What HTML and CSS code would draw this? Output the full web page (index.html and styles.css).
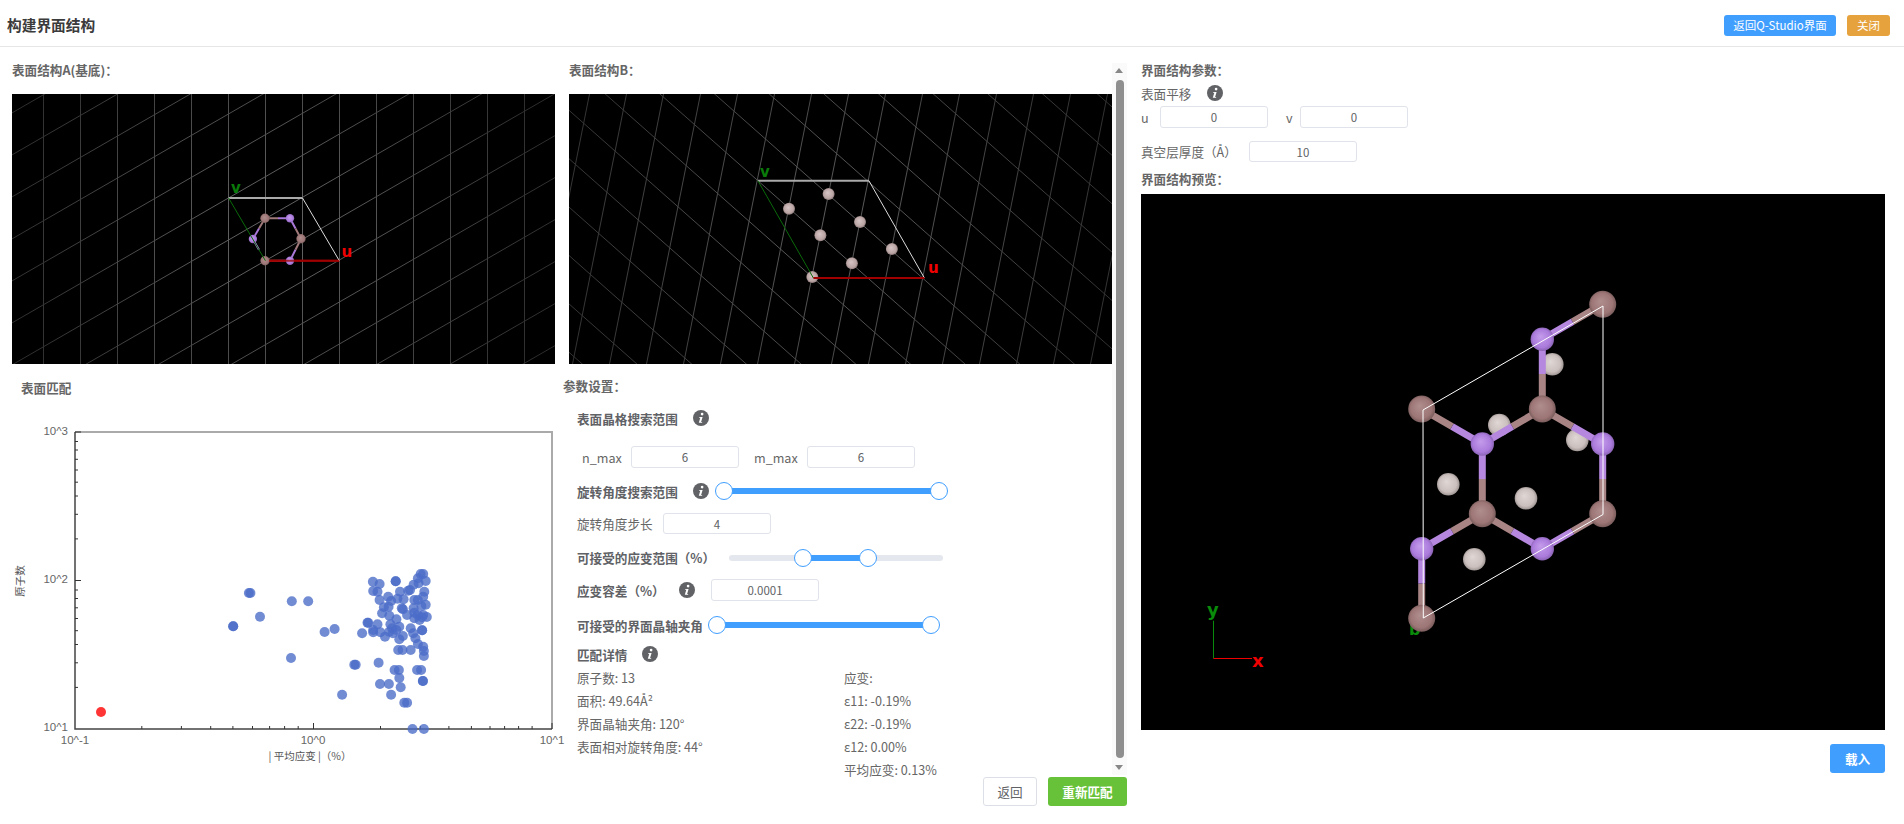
FILE: index.html
```html
<!DOCTYPE html>
<html lang="zh-CN">
<head>
<meta charset="utf-8">
<title>构建界面结构</title>
<link rel="stylesheet" href="styles.css">
</head>
<body>
<svg class="defs" width="0" height="0" aria-hidden="true">
  <defs>
    <radialGradient id="gridA" gradientUnits="userSpaceOnUse" cx="265" cy="135" r="300">
      <stop offset="0" stop-color="#686868"/><stop offset="1" stop-color="#2a2a2a"/>
    </radialGradient>
    <radialGradient id="gridB" gradientUnits="userSpaceOnUse" cx="265" cy="135" r="300">
      <stop offset="0" stop-color="#5e5e5e"/><stop offset="1" stop-color="#303030"/>
    </radialGradient>
    <radialGradient id="brown" cx=".5" cy=".5" r=".55" fx=".42" fy=".38">
      <stop offset="0" stop-color="#b08e8e"/><stop offset=".7" stop-color="#9d7676"/><stop offset="1" stop-color="#6e5353"/>
    </radialGradient>
    <radialGradient id="purple" cx=".5" cy=".5" r=".55" fx=".42" fy=".38">
      <stop offset="0" stop-color="#c49ceb"/><stop offset=".7" stop-color="#ab7bdc"/><stop offset="1" stop-color="#7f5ba6"/>
    </radialGradient>
    <radialGradient id="pale" cx=".5" cy=".5" r=".55" fx=".42" fy=".38">
      <stop offset="0" stop-color="#e0d8d6"/><stop offset=".7" stop-color="#cabfbd"/><stop offset="1" stop-color="#8f8684"/>
    </radialGradient>
    <radialGradient id="mauve" cx=".5" cy=".5" r=".55" fx=".42" fy=".38">
      <stop offset="0" stop-color="#d6c4c4"/><stop offset=".7" stop-color="#bba5a5"/><stop offset="1" stop-color="#7d6c6c"/>
    </radialGradient>
    <symbol id="info" viewBox="0 0 16 16">
      <circle cx="8" cy="8" r="8" fill="#606266"/>
      <circle cx="9.1" cy="4.1" r="1.35" fill="#fff"/>
      <path d="M6.3 6.9h3.3L8.1 11.9h1.2l-.3.9H5.8l1.5-5h-1.3z" fill="#fff"/>
    </symbol>
  </defs>
</svg>

<header class="topbar">
  <h1 class="page-title">构建界面结构</h1>
  <div class="topbar-actions">
    <button class="btn btn-small btn-blue">返回Q-Studio界面</button>
    <button class="btn btn-small btn-orange">关闭</button>
  </div>
</header>

<main class="workspace">
  <section class="matching">
    <div class="viewers">
      <div class="viewer">
        <div class="section-title">表面结构A(基底)：</div>
        <svg class="scene" viewBox="0 0 543 270">
          <rect width="543" height="270"/>
          <path stroke="url(#gridA)" fill="none" d="M31.5 0V270M68.5 0V270M105.5 0V270M142.5 0V270M179.5 0V270M216.5 0V270M253.5 0V270M290.5 0V270M327.5 0V270M364.5 0V270M401.5 0V270M438.5 0V270M475.5 0V270M512.5 0V270"/>
          <path stroke="url(#gridA)" fill="none" d="M0 18.9L543 -294.4M0 60.9L543 -252.4M0 102.9L543 -210.4M0 144.9L543 -168.4M0 186.9L543 -126.4M0 228.9L543 -84.4M0 270.9L543 -42.4M0 312.9L543 -.4M0 354.9L543 41.6M0 396.9L543 83.6M0 438.9L543 125.6M0 480.9L543 167.6M0 522.9L543 209.6M0 564.9L543 251.6"/>
          <g stroke-width="2" fill="none">
            <path stroke="#a07a7a" d="M253 124.3H266M253 124.3L247 134.6M289 144.7L283.500 155.700M253 166.700H266M289 144.7L283.500 134.500"/>
            <path stroke="#a878d8" d="M266 124.300H278M247 134.600L240.900 145M283.500 155.700L278 166.700M266 166.700H278M283.500 134.500L278 124.300M240.900 145L247 155.800"/>
          </g>
          <path d="M253.400 166.700H327.300" stroke="#a00000" stroke-width="2"/>
          <g fill="url(#purple)">
            <circle cx="278" cy="124.300" r="4.200"/><circle cx="278" cy="166.700" r="4.200"/><circle cx="240.900" cy="145" r="4.200"/>
          </g>
          <g fill="url(#brown)">
            <circle cx="253" cy="124.300" r="4.700"/><circle cx="289" cy="144.700" r="4.700"/><circle cx="253" cy="166.700" r="4.700"/>
          </g>
          <path d="M216.600 104H290.500" stroke="#aaa" stroke-width="2"/>
          <path d="M290.500 104L327.300 166.700" stroke="#ddd"/>
          <path d="M216.600 104L253.400 166.700" stroke="#0a6a0a"/>
          <path d="M257 166.700H327.300" stroke="#a00000" stroke-width="2" stroke-opacity=".75"/>
          <text class="axis-letter axis-v" x="219" y="99">v</text>
          <text class="axis-letter axis-u" x="329.500" y="163">u</text>
        </svg>
      </div>
      <div class="viewer">
        <div class="section-title">表面结构B：</div>
        <svg class="scene" viewBox="0 0 543 270">
          <rect width="543" height="270"/>
          <path stroke="url(#gridB)" fill="none" d="M20.500 0L-33.500 270M57.500 0L3.500 270M94.500 0L40.500 270M131.500 0L77.500 270M168.500 0L114.500 270M205.500 0L151.500 270M242.500 0L188.500 270M279.500 0L225.500 270M316.500 0L262.500 270M353.500 0L299.500 270M390.500 0L336.500 270M427.500 0L373.500 270M464.500 0L410.500 270M501.500 0L447.500 270M538.500 0L484.500 270M575.500 0L521.500 270"/>
          <path stroke="url(#gridB)" fill="none" d="M0 -467.700L543 12.900M0 -419.300L543 61.300M0 -370.900L543 109.700M0 -322.500L543 158.100M0 -274.100L543 206.500M0 -225.700L543 254.900M0 -177.300L543 303.300M0 -128.900L543 351.700M0 -80.500L543 400.100M0 -32.100L543 448.500M0 16.300L543 496.900M0 64.700L543 545.300M0 113.100L543 593.700M0 161.500L543 642.100M0 209.900L543 690.500M0 258.300L543 738.900"/>
          <g fill="url(#mauve)">
            <circle cx="259.600" cy="100" r="6"/><circle cx="220" cy="114.700" r="6"/><circle cx="291" cy="128" r="6"/><circle cx="251.400" cy="141.300" r="6"/><circle cx="322.900" cy="155" r="6"/><circle cx="282.900" cy="169.300" r="6"/><circle cx="243.300" cy="183" r="6"/>
          </g>
          <path d="M188.900 86.700H299.900" stroke="#aaa" stroke-width="2"/>
          <path d="M299.900 86.700L355.400 184" stroke="#ddd"/>
          <path d="M188.900 86.700L244.400 184" stroke="#0a6a0a"/>
          <path d="M244.400 184H355.400" stroke="#a00000" stroke-width="2"/>
          <text class="axis-letter axis-v" x="191" y="83">v</text>
          <text class="axis-letter axis-u" x="359" y="179">u</text>
        </svg>
      </div>
    </div>

    <div class="lower">
      <div class="chart-panel">
        <div class="chart-title">表面匹配</div>
        <svg class="chart" viewBox="0 36 560 364" width="560" height="364">
          <path class="frame-light" d="M75 62H552V359"/>
          <path class="frame-dark" d="M75 62V359H552"/>
          <path class="ticks" d="M75 210.500h6M75 317.400h3M75 292.800h3M75 274.500h3M75 260.700h3M75 248.500h3M75 237.800h3M75 228.500h3M75 220h3M75 168.900h3M75 144.300h3M75 126h3M75 112.200h3M75 100h3M75 89.300h3M75 80h3M75 71.500h3M75 62h6"/>
          <path class="ticks" d="M313.500 359v-6M552 359v-6M141.800 359v-3M181.400 359v-3M210.700 359v-3M232.900 359v-3M252.500 359v-3M269.600 359v-3M284.600 359v-3M298.200 359v-3M380.500 359v-3M420.400 359v-3M448.900 359v-3M471.400 359v-3M490 359v-3M504.600 359v-3M518.600 359v-3M532.100 359v-3"/>
          <g class="tick-labels">
            <text class="end" x="68" y="65">10^3</text>
            <text class="end" x="68" y="213">10^2</text>
            <text class="end" x="68" y="361">10^1</text>
            <text class="mid" x="75" y="374">10^-1</text>
            <text class="mid" x="313" y="374">10^0</text>
            <text class="mid" x="552" y="374">10^1</text>
          </g>
          <text class="axis-name" x="310" y="390">| 平均应变 |（%）</text>
          <text class="axis-name" transform="translate(24 211) rotate(-90)">原子数</text>
          <g class="points">
            <circle cx="248.900" cy="223"/><circle cx="250.400" cy="223"/><circle cx="233.200" cy="256.300"/><circle cx="233.200" cy="256.300"/><circle cx="260" cy="246.700"/><circle cx="291.800" cy="231.300"/><circle cx="308.200" cy="231.300"/><circle cx="324.600" cy="262"/><circle cx="334.600" cy="259"/><circle cx="291" cy="288"/><circle cx="354.300" cy="294.700"/><circle cx="355.700" cy="294.700"/><circle cx="342.100" cy="324.700"/><circle cx="362.100" cy="263.300"/><circle cx="367.500" cy="252.700"/><circle cx="368.200" cy="252.700"/><circle cx="372.900" cy="211.700"/><circle cx="379.600" cy="214"/><circle cx="373.200" cy="221"/><circle cx="377.500" cy="221.700"/><circle cx="379.600" cy="230"/><circle cx="388.200" cy="226.700"/><circle cx="395.700" cy="211.300"/><circle cx="395.700" cy="211.300"/><circle cx="383.900" cy="237.300"/><circle cx="388.600" cy="236.700"/><circle cx="391.100" cy="231"/><circle cx="382.100" cy="243.300"/><circle cx="389.300" cy="245.700"/><circle cx="400" cy="221.700"/><circle cx="397.500" cy="228.700"/><circle cx="403.600" cy="229.300"/><circle cx="408.200" cy="220.700"/><circle cx="410" cy="220"/><circle cx="413.600" cy="214.700"/><circle cx="417.900" cy="208.300"/><circle cx="418.600" cy="213.300"/><circle cx="420.700" cy="204"/><circle cx="423.200" cy="204"/><circle cx="425.700" cy="211"/><circle cx="424.300" cy="221.700"/><circle cx="423.200" cy="226.700"/><circle cx="414.300" cy="230"/><circle cx="417.900" cy="230"/><circle cx="402.900" cy="239.300"/><circle cx="401.800" cy="238.300"/><circle cx="413.600" cy="238.300"/><circle cx="421.400" cy="236"/><circle cx="425.700" cy="234.700"/><circle cx="414.300" cy="242.700"/><circle cx="417.900" cy="245"/><circle cx="423.200" cy="245"/><circle cx="426.800" cy="247"/><circle cx="414.300" cy="248.300"/><circle cx="419.600" cy="250"/><circle cx="422.100" cy="247.300"/><circle cx="407.100" cy="245"/><circle cx="396.400" cy="249.300"/><circle cx="390.400" cy="254.300"/><circle cx="377.500" cy="254.300"/><circle cx="373.200" cy="260"/><circle cx="373.200" cy="262.300"/><circle cx="380.400" cy="262.300"/><circle cx="385" cy="266.700"/><circle cx="389.300" cy="261.700"/><circle cx="392.900" cy="263.300"/><circle cx="392.100" cy="258.300"/><circle cx="399.300" cy="256.700"/><circle cx="396.400" cy="260"/><circle cx="402.900" cy="266"/><circle cx="399.300" cy="269.300"/><circle cx="410.700" cy="258.300"/><circle cx="413.200" cy="263.300"/><circle cx="415.400" cy="268.300"/><circle cx="417.900" cy="274"/><circle cx="422.100" cy="260.300"/><circle cx="422.100" cy="260.300"/><circle cx="423.200" cy="276.700"/><circle cx="423.900" cy="281"/><circle cx="423.900" cy="286"/><circle cx="398.200" cy="280"/><circle cx="402.500" cy="280"/><circle cx="410.700" cy="280"/><circle cx="378.600" cy="292.700"/><circle cx="394.600" cy="300"/><circle cx="398.900" cy="300"/><circle cx="417.100" cy="300"/><circle cx="421.100" cy="300"/><circle cx="399.300" cy="308"/><circle cx="422.900" cy="311"/><circle cx="422.900" cy="311"/><circle cx="380" cy="314"/><circle cx="388.900" cy="314"/><circle cx="400.700" cy="317.300"/><circle cx="391.100" cy="324.700"/><circle cx="404.300" cy="332.700"/><circle cx="407.100" cy="332.700"/><circle cx="412.500" cy="359"/><circle cx="423.900" cy="359"/>
            <circle class="selected" cx="101" cy="342"/>
          </g>
        </svg>
      </div>

      <div class="params">
        <div class="section-title params-title">参数设置：</div>

        <div class="row row-head">
          <span class="label strong w-100">表面晶格搜索范围</span>
          <svg class="info info-gap"><use href="#info"/></svg>
        </div>

        <div class="row row-lattice">
          <span class="label w-nmax">n_max</span>
          <span class="field">6</span>
          <span class="label w-mmax">m_max</span>
          <span class="field">6</span>
        </div>

        <div class="row row-rot">
          <span class="label strong w-100">旋转角度搜索范围</span>
          <svg class="info info-gap"><use href="#info"/></svg>
          <div class="slider slider-rot">
            <div class="slider-fill" style="left:0%;width:100%"></div>
            <span class="handle" style="left:0%"></span>
            <span class="handle" style="left:100%"></span>
          </div>
        </div>

        <div class="row row-step">
          <span class="label w-step">旋转角度步长</span>
          <span class="field">4</span>
        </div>

        <div class="row row-strain">
          <span class="label strong w-strain">可接受的应变范围（%）</span>
          <div class="slider">
            <div class="slider-fill" style="left:34.7%;width:30.1%"></div>
            <span class="handle" style="left:34.7%"></span>
            <span class="handle" style="left:64.8%"></span>
          </div>
        </div>

        <div class="row row-tol">
          <span class="label strong w-tol">应变容差（%）</span>
          <svg class="info"><use href="#info"/></svg>
          <span class="field field-tol">0.0001</span>
        </div>

        <div class="row row-angle">
          <span class="label strong w-angle">可接受的界面晶轴夹角</span>
          <div class="slider">
            <div class="slider-fill" style="left:0%;width:100%"></div>
            <span class="handle" style="left:0%"></span>
            <span class="handle" style="left:100%"></span>
          </div>
        </div>

        <div class="row row-detail-head">
          <span class="label strong w-detail">匹配详情</span>
          <svg class="info"><use href="#info"/></svg>
        </div>

        <div class="details">
          <div class="detail-col">
            <div>原子数: 13</div>
            <div>面积: 49.64Å²</div>
            <div>界面晶轴夹角: 120°</div>
            <div>表面相对旋转角度: 44°</div>
          </div>
          <div class="detail-col">
            <div>应变:</div>
            <div>ε11: -0.19%</div>
            <div>ε22: -0.19%</div>
            <div>ε12: 0.00%</div>
            <div>平均应变: 0.13%</div>
          </div>
        </div>
      </div>
    </div>

    <div class="actions">
      <button class="btn btn-plain">返回</button>
      <button class="btn btn-green">重新匹配</button>
    </div>

    <div class="scrollbar">
      <span class="arrow arrow-up"></span>
      <span class="thumb"></span>
      <span class="arrow arrow-down"></span>
    </div>
  </section>

  <aside class="interface">
    <div class="section-title">界面结构参数：</div>
    <div class="row row-shift-head">
      <span class="label w-shift">表面平移</span>
      <svg class="info"><use href="#info"/></svg>
    </div>
    <div class="row row-shift">
      <span class="label w-u">u</span>
      <span class="field field-side">0</span>
      <span class="label w-v">v</span>
      <span class="field field-side">0</span>
    </div>
    <div class="row row-vacuum">
      <span class="label w-vacuum">真空层厚度（Å）</span>
      <span class="field field-side">10</span>
    </div>
    <div class="section-title preview-title">界面结构预览：</div>
    <svg class="preview" viewBox="0 0 744 536">
      <rect width="744" height="536"/>
      <g fill="url(#pale)">
        <circle cx="411.300" cy="170.300" r="11.300"/><circle cx="358.300" cy="231" r="11.300"/><circle cx="436.300" cy="246" r="11.300"/><circle cx="307.300" cy="290.300" r="11.300"/><circle cx="385" cy="304.300" r="11.300"/><circle cx="333.300" cy="365.300" r="11.300"/>
      </g>
      <text class="atom-a" x="456" y="107">a</text>
      <text class="atom-b" x="268" y="441">b</text>
      <g stroke="#a98484" stroke-width="7">
        <path d="M461.700 110.300L431.500 127.800M401.300 215V180M401.300 215L371.300 232.500M401.300 215L431.500 232.500M280.700 215L311 232.500M341.300 319.700V285M461.700 319.700V285M341.300 319.700L311 337.200M341.300 319.700L371.300 337.200M461.700 319.700L431.500 337.200M280.700 424.300V389.500"/>
      </g>
      <g stroke="#b587df" stroke-width="7">
        <path d="M431.500 127.800L401.300 145.300M401.300 180V145.300M371.300 232.500L341.300 250M431.500 232.500L461.700 250M311 232.500L341.300 250M341.300 285V250M461.700 285V250M311 337.200L280.700 354.700M371.300 337.200L401.300 354.700M431.500 337.200L401.300 354.700M280.700 389.500V354.700"/>
      </g>
      <g fill="url(#purple)">
        <circle cx="401.300" cy="145.300" r="11.700"/><circle cx="341.300" cy="250" r="11.700"/><circle cx="461.700" cy="250" r="11.700"/><circle cx="280.700" cy="354.700" r="11.700"/><circle cx="401.300" cy="354.700" r="11.700"/>
      </g>
      <g fill="url(#brown)">
        <circle cx="461.700" cy="110.300" r="13.500"/><circle cx="280.700" cy="215" r="13.500"/><circle cx="401.300" cy="215" r="13.500"/><circle cx="341.300" cy="319.700" r="13.500"/><circle cx="461.700" cy="319.700" r="13.500"/><circle cx="280.700" cy="424.300" r="13.500"/>
      </g>
      <path d="M282 216L462 112V320.500L282.300 424Z" fill="none" stroke="#fff"/>
      <path d="M72.500 426.700V464.500" stroke="#0a8a0a" fill="none"/>
      <path d="M72.500 464.500H111" stroke="#f00000" fill="none"/>
      <text class="axis-name-y" x="66" y="422">y</text>
      <text class="axis-name-x" x="111" y="473">x</text>
    </svg>
    <div class="load-row">
      <button class="btn btn-blue btn-load">载入</button>
    </div>
  </aside>
</main>
</body>
</html>
```

FILE: styles.css
```css
* { box-sizing: border-box; }

html, body {
  margin: 0;
  height: 824px;
  overflow: hidden;
  background: #fff;
}

body {
  font-family: "Noto Sans CJK SC", "Noto Sans", sans-serif;
  font-size: 12.6px;
  color: #606266;
}

.defs { position: absolute; }

.topbar {
  height: 47px;
  display: flex;
  align-items: flex-start;
  justify-content: space-between;
  padding: 15px 14px 0 7px;
  border-bottom: 1px solid #e6e6e6;
}

.page-title {
  margin: 0;
  font-size: 14.7px;
  line-height: 20px;
  font-weight: 700;
  color: #3b3b3b;
}

.topbar-actions { display: flex; gap: 11px; }

.btn {
  font-family: inherit;
  border: 0;
  border-radius: 3px;
  padding: 0;
  color: #fff;
  cursor: pointer;
}

.btn-small { height: 21px; font-size: 11.5px; line-height: 21px; }
.btn-small.btn-blue { width: 112px; }
.btn-small.btn-orange { width: 43px; }
.btn-blue { background: #409eff; }
.btn-orange { background: #e6a23c; }

.btn-green {
  width: 79px;
  height: 29px;
  background: #67c23a;
  font-size: 12.6px;
  font-weight: 700;
}

.btn-plain {
  width: 54px;
  height: 29px;
  background: #fff;
  border: 1px solid #dcdfe6;
  color: #606266;
  font-size: 12.6px;
}

.workspace { display: flex; }

.matching {
  position: relative;
  width: 1127px;
  flex: none;
}

.viewers {
  display: grid;
  grid-template-columns: 543px 543px;
  column-gap: 14px;
  padding-left: 12px;
}

.section-title {
  height: 20px;
  line-height: 20px;
  font-size: 12.6px;
  font-weight: 700;
  color: #666;
}

.viewer .section-title { margin: 13px 0 14px; }

.scene {
  display: block;
  width: 543px;
  height: 270px;
}

.axis-letter {
  font-family: "DejaVu Sans", sans-serif;
  font-size: 15px;
  font-weight: 700;
}

.axis-v { fill: #0a7a0a; }
.axis-u { fill: #f00000; }

.lower {
  display: flex;
  margin-top: 6px;
  height: 407px;
}

.chart-panel { width: 560px; flex: none; }

.chart-title {
  height: 36px;
  line-height: 36px;
  padding-left: 21px;
  font-size: 12.6px;
  font-weight: 700;
  color: #666;
}

.chart { display: block; overflow: visible; }

.frame-light { fill: none; stroke: #aaa; stroke-width: 2; }
.frame-dark { fill: none; stroke: #444; stroke-width: 1.5; }
.ticks { fill: none; stroke: #333; stroke-width: 1; }

.tick-labels text {
  font-family: "Liberation Sans", sans-serif;
  font-size: 11.5px;
  fill: #666;
}

.tick-labels .end { text-anchor: end; }
.tick-labels .mid { text-anchor: middle; }

.axis-name {
  font-size: 10.5px;
  fill: #555;
  text-anchor: middle;
}

.points circle {
  r: 5px;
  fill: #4a6cc8;
  fill-opacity: .78;
}

.points .selected {
  fill: #ff1f1f;
  fill-opacity: .9;
}

.params {
  flex: 1;
  min-width: 0;
}

.params-title {
  height: 32px;
  line-height: 32px;
  padding-left: 3px;
}

.row {
  display: flex;
  align-items: center;
}

.params .row { padding-left: 17px; }

.label {
  flex: none;
  white-space: nowrap;
  color: #666;
}

.label.strong { font-weight: 700; color: #606266; }

.info {
  width: 16px;
  height: 16px;
  flex: none;
}

.info-gap { margin-left: 16px; }

.field {
  flex: none;
  width: 108px;
  height: 22px;
  border: 1px solid #e0e3ea;
  border-radius: 3px;
  background: #fff;
  text-align: center;
  font-size: 11.5px;
  line-height: 20px;
  color: #606266;
}

.w-100 { width: 100px; }
.w-nmax { width: 54px; padding-left: 5px; }
.w-mmax { width: 53px; margin-left: 15px; }
.w-step { width: 86px; }
.w-strain { width: 152px; }
.w-tol { width: 102px; }
.w-angle { width: 140px; }
.w-detail { width: 65px; }

.row-head { height: 32px; }
.row-lattice { height: 22px; margin-top: 12px; }
.row-rot { height: 26px; margin-top: 10px; }
.row-step { height: 21px; margin-top: 9px; }
.row-step .field { height: 21px; }
.row-strain { height: 24px; margin-top: 11.5px; }
.row-tol { height: 22px; margin-top: 9.5px; }
.row-angle { height: 24px; margin-top: 12px; }
.row-detail-head { height: 24px; margin-top: 5px; }

.field-tol { margin-left: 16px; }

.slider {
  position: relative;
  flex: none;
  width: 214px;
  height: 6px;
  border-radius: 3px;
  background: #e4e7ed;
}

.slider-rot { margin-left: 15px; width: 215px; }

.slider-fill {
  position: absolute;
  top: 0;
  bottom: 0;
  border-radius: 3px;
  background: #409eff;
}

.handle {
  position: absolute;
  top: 50%;
  width: 18px;
  height: 18px;
  border: 1.5px solid #409eff;
  border-radius: 50%;
  background: #fff;
  transform: translate(-50%, -50%);
}

.details {
  display: flex;
  padding-left: 17px;
  color: #666;
}

.detail-col > div {
  height: 23px;
  line-height: 23px;
  white-space: nowrap;
}

.detail-col:first-child { width: 267px; flex: none; }

.actions {
  display: flex;
  justify-content: flex-end;
  gap: 11px;
}

.scrollbar {
  position: absolute;
  top: 16px;
  left: 1112px;
  width: 15px;
  height: 712px;
  background: #fafafa;
}

.arrow {
  position: absolute;
  left: 3px;
  width: 0;
  height: 0;
  border-left: 4.5px solid transparent;
  border-right: 4.5px solid transparent;
}

.arrow-up { top: 5px; border-bottom: 5px solid #888; }
.arrow-down { bottom: 5px; border-top: 5px solid #888; }

.thumb {
  position: absolute;
  top: 17px;
  left: 3.5px;
  width: 8px;
  height: 678px;
  border-radius: 4px;
  background: #8f8f8f;
}

.interface {
  width: 758px;
  padding-left: 14px;
  flex: none;
}

.interface > .section-title:first-child { margin-top: 13px; }

.row-shift-head { height: 20px; margin-top: 3px; }
.w-shift { width: 66px; }
.row-shift { height: 22px; margin-top: 3px; }
.w-u { width: 19px; }
.w-v { width: 14px; margin-left: 18px; }
.field-side { width: 108px; }
.row-vacuum { height: 21px; margin-top: 13px; }
.row-vacuum .field { height: 21px; }
.w-vacuum { width: 108px; }

.preview-title { margin: 7px 0 5px; }

.preview {
  display: block;
  width: 744px;
  height: 536px;
}

.atom-a {
  font-family: "DejaVu Sans", sans-serif;
  font-size: 16px;
  font-weight: 700;
  fill: #f00000;
}

.atom-b {
  font-family: "DejaVu Sans", sans-serif;
  font-size: 16px;
  font-weight: 700;
  fill: #0a8a0a;
}

.axis-name-y,
.axis-name-x {
  font-family: "DejaVu Sans", sans-serif;
  font-size: 18px;
  font-weight: 700;
}

.axis-name-y { fill: #0a8a0a; }
.axis-name-x { fill: #f00000; }

.load-row {
  display: flex;
  justify-content: flex-end;
  width: 744px;
  margin-top: 14px;
}

.btn-load {
  width: 55px;
  height: 29px;
  font-size: 12.6px;
  font-weight: 700;
}
```
